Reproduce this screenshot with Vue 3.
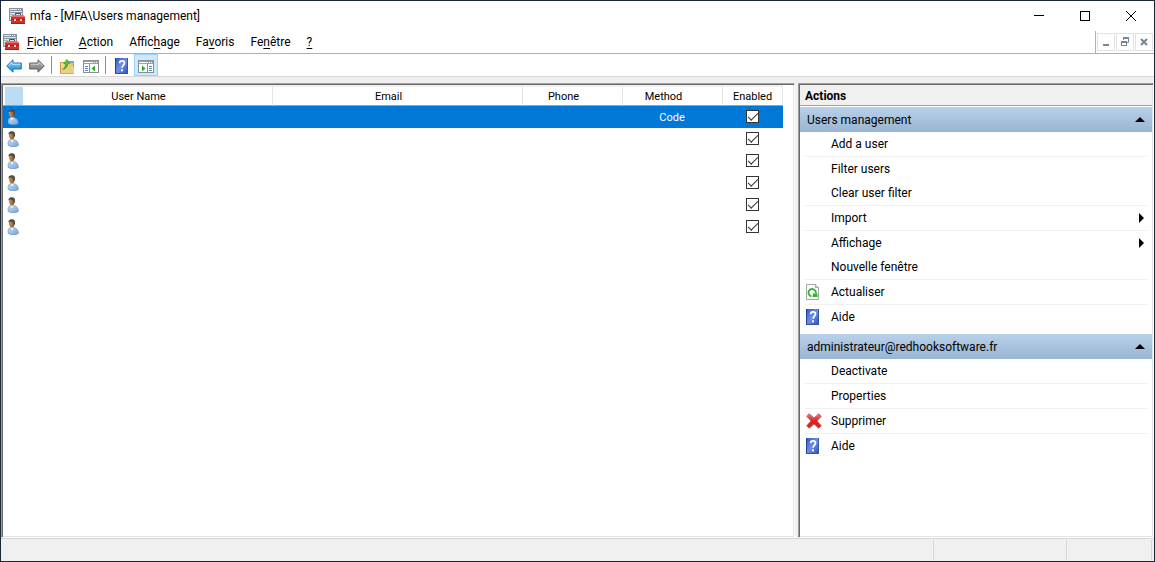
<script setup>
import { ref } from 'vue'

const menus = [
  { before: '', key: 'F', after: 'ichier' },
  { before: '', key: 'A', after: 'ction' },
  { before: 'Affic', key: 'h', after: 'age' },
  { before: 'Fa', key: 'v', after: 'oris' },
  { before: 'Fe', key: 'n', after: 'être' },
  { before: '', key: '?', after: '' },
]

const users = ref([
  { method: 'Code', enabled: true },
  { method: '', enabled: true },
  { method: '', enabled: true },
  { method: '', enabled: true },
  { method: '', enabled: true },
  { method: '', enabled: true },
])
const selected = ref(0)

const groups = [
  {
    title: 'Users management',
    items: [
      { label: 'Add a user', line: true },
      { label: 'Filter users' },
      { label: 'Clear user filter', line: true },
      { label: 'Import', line: true, sub: true },
      { label: 'Affichage', sub: true },
      { label: 'Nouvelle fenêtre', line: true },
      { label: 'Actualiser', line: true, icon: 'refresh' },
      { label: 'Aide', icon: 'help' },
    ],
  },
  {
    title: 'administrateur@redhooksoftware.fr',
    items: [
      { label: 'Deactivate', line: true },
      { label: 'Properties', line: true },
      { label: 'Supprimer', line: true, icon: 'delete' },
      { label: 'Aide', icon: 'help' },
    ],
  },
]
</script>

<template>
  <div class="window">
    <svg class="defs" width="0" height="0" aria-hidden="true">
      <defs>
        <linearGradient id="g-blue" x1="0" y1="0" x2="0" y2="1">
          <stop offset="0" stop-color="#8fdcff" /><stop offset="1" stop-color="#1583d6" />
        </linearGradient>
        <linearGradient id="g-gray" x1="0" y1="0" x2="0" y2="1">
          <stop offset="0" stop-color="#b4b4b4" /><stop offset="1" stop-color="#757575" />
        </linearGradient>
        <linearGradient id="g-help" x1="0" y1="0" x2="1" y2="1">
          <stop offset="0" stop-color="#2f55c4" /><stop offset=".5" stop-color="#6d8fe6" /><stop offset="1" stop-color="#2a4bb0" />
        </linearGradient>
        <linearGradient id="g-red" x1="0" y1="0" x2="0" y2="1">
          <stop offset="0" stop-color="#f08078" /><stop offset=".5" stop-color="#e0201c" /><stop offset="1" stop-color="#d92824" />
        </linearGradient>
        <linearGradient id="g-folder" x1="0" y1="0" x2="1" y2="1">
          <stop offset="0" stop-color="#fbe9a4" /><stop offset="1" stop-color="#dcb04c" />
        </linearGradient>
        <linearGradient id="g-body" x1="0" y1="0" x2="1" y2="1">
          <stop offset="0" stop-color="#c4def5" /><stop offset="1" stop-color="#72a5dc" />
        </linearGradient>
        <linearGradient id="g-face" x1="0" y1="0" x2="1" y2="0">
          <stop offset="0" stop-color="#c9a070" /><stop offset="1" stop-color="#7c4a20" />
        </linearGradient>
        <symbol id="i-app" viewBox="0 0 16 16">
          <rect x=".5" y=".5" width="13" height="12" fill="#dfe4e9" stroke="#8a949e" />
          <rect x="0" y="0" width="14" height="5" fill="#8794a1" />
          <path d="M1 1.500h7M1 3.500h12" stroke="#dfe5ea" />
          <path d="M9 1.500h1M11 1.500h1" stroke="#fff" />
          <path d="M1 6.500h4M1 8.500h2" stroke="#a6b3bf" />
          <path d="M6.500 7.500V5.500h5v2" fill="none" stroke="#5d4240" />
          <path d="M4 7h10l2 2v7H2V9z" fill="#d2322d" />
          <path d="M4 7.500h10M3 8.500h12" stroke="#e4706a" />
          <path d="M2 11.500h14" stroke="#a01b17" />
          <path d="M5 11h2v2H5zM11 11h2v2h-2z" fill="#f4dad8" />
          <path d="M2 15.500h14" stroke="#a51b17" />
        </symbol>
        <symbol id="i-back" viewBox="0 0 16 14">
          <path d="M.7 7 7 .8v3.200h8.300v6H7v3.200z" fill="url(#g-blue)" stroke="#2b6fae" />
          <path d="M2.500 6.800 6 3.300v2h8.200" fill="none" stroke="#b9e9ff" />
        </symbol>
        <symbol id="i-forward" viewBox="0 0 16 14">
          <path d="M15.300 7 9 .8v3.200H.7v6H9v3.200z" fill="url(#g-gray)" stroke="#606060" />
          <path d="M1.800 5.300H10v-2l3.500 3.500" fill="none" stroke="#cfcfcf" />
        </symbol>
        <symbol id="i-folder" viewBox="0 0 15 15">
          <path d="M.5 3.500h5l1-1h7v11.800H.5z" fill="url(#g-folder)" stroke="#c79c3c" />
          <path d="M10 3.500h3.500" stroke="#6aa5d8" />
          <path d="M1 7.500h13v6.500H1z" fill="#ecd07c" />
          <path d="M3 10.500C6.300 9.500 7.700 7.500 7.600 4.600H10L6.900.5 3.800 4.600h1.700C5.700 7 5 8.500 3 10.500z" fill="#55c534" stroke="#2d961b" stroke-width=".7" />
        </symbol>
        <symbol id="i-pane-left" viewBox="0 0 16 13">
          <rect x=".5" y=".5" width="15" height="12" fill="#fff" stroke="#868e96" />
          <path d="M1 1h14v3H1z" fill="#9aa3ab" />
          <path d="M1 2.500h9M11 2.500h1M13 2.500h1" stroke="#fff" />
          <path d="M6.500 4v9" stroke="#868e96" />
          <path d="M2 6.500h3M2 8.500h3M2 10.500h3" stroke="#4e87c4" />
          <path d="M12 5.500v6L8.500 8.500z" fill="#36a82d" />
        </symbol>
        <symbol id="i-pane-right" viewBox="0 0 16 13">
          <rect x=".5" y=".5" width="15" height="12" fill="#fff" stroke="#868e96" />
          <path d="M1 1h14v3H1z" fill="#9aa3ab" />
          <path d="M1 2.500h9M11 2.500h1M13 2.500h1" stroke="#fff" />
          <path d="M9.500 4v9" stroke="#868e96" />
          <path d="M11 6.500h3M11 8.500h3M11 10.500h3" stroke="#4e87c4" />
          <path d="M4 5.500v6l3.500-3z" fill="#36a82d" />
        </symbol>
        <symbol id="i-help" viewBox="0 0 13 16">
          <rect width="13" height="16" fill="url(#g-help)" />
          <path d="M.5 0v16" stroke="#233f9c" />
          <path d="M0 15.500h13M12.500 0v16" stroke="#3553a8" />
          <path d="M4.600 5.300C4.600 3.600 5.600 2.900 7 2.900s2.500.8 2.500 2.200C9.500 7 7.100 7.200 7.100 9.800" fill="none" stroke="#fff" stroke-width="1.700" />
          <rect x="6" y="11.300" width="2" height="2" fill="#fff" />
        </symbol>
        <symbol id="i-refresh" viewBox="0 0 13 16">
          <path d="M.5.5h9l3 3v12H.5z" fill="#fbfbfb" stroke="#a5a5a5" />
          <path d="M9.500.5v3h3" fill="#ddd" stroke="#a5a5a5" />
          <path d="M5.500 12.300A3.700 3.700 0 1 1 9.800 9.500" fill="none" stroke="#35b52e" stroke-width="1.800" />
          <path d="M6.800 9.500h4.700V13H6.800z" fill="#35b52e" />
        </symbol>
        <symbol id="i-delete" viewBox="0 0 16 16">
          <path d="M3.200.8 8 5 12.800.8l2.500 2.400L11 8l4.300 4.800-2.500 2.500L8 11l-4.800 4.300-2.500-2.500L5 8 .7 3.200z" fill="url(#g-red)" stroke="#b5524e" stroke-width=".8" stroke-linejoin="round" />
        </symbol>
        <symbol id="i-user" viewBox="0 0 12 16">
          <path d="M1 12.500C1 9.500 2.600 8.600 5 8.300c3.500.2 6.300 1.800 6.300 6.200C9 16.200 3.500 16.200 1.300 14.500z" fill="url(#g-body)" stroke="#5f86b4" stroke-width=".6" />
          <path d="M3.500 8.500 5 11.500 6.700 8.800 5.500 7.500z" fill="#f7fafd" />
          <path d="M1.700 3.500C1.700 1.300 3 .6 4.800.6S7.700 1.700 7.600 4C7.500 6.700 6.500 8.800 4.800 8.800 3 8.800 1.900 6.300 1.700 3.500z" fill="url(#g-face)" />
          <path d="M1.500 3.200C1.500.9 3 .2 4.900.2 7.200.2 8.300 1.600 8 4.500L7 6.200 6.300 3 3.500 2.400z" fill="#4c4a48" />
        </symbol>
      </defs>
    </svg>

    <header class="title-bar">
      <svg class="app-icon" aria-hidden="true"><use href="#i-app" /></svg>
      <span class="title">mfa - [MFA\Users management]</span>
      <div class="caption">
        <button type="button" aria-label="Réduire"><svg width="10" height="10"><path d="M0 4.500h10" stroke="#000" /></svg></button>
        <button type="button" aria-label="Agrandir"><svg width="10" height="10"><rect x=".5" y=".5" width="9" height="9" fill="none" stroke="#000" /></svg></button>
        <button type="button" aria-label="Fermer"><svg width="10" height="10"><path d="M0 0l10 10M10 0L0 10" stroke="#000" /></svg></button>
      </div>
    </header>

    <nav class="menu-bar">
      <svg class="app-icon" aria-hidden="true"><use href="#i-app" /></svg>
      <button v-for="m in menus" :key="m.key" type="button" class="menu">{{ m.before }}<u>{{ m.key }}</u>{{ m.after }}</button>
      <div class="mdi">
        <button type="button" aria-label="Réduire la vue"><svg width="10" height="10"><path d="M2 8h6" stroke="#778492" stroke-width="2" /></svg></button>
        <button type="button" aria-label="Restaurer la vue"><svg width="10" height="10"><path d="M3.500 3V1.500h5v4H7" fill="none" stroke="#778492" /><path d="M3 1h6" stroke="#778492" stroke-width="2" /><rect x="1.500" y="4.500" width="5" height="4" fill="#fff" stroke="#778492" /><path d="M1 5h6" stroke="#778492" stroke-width="2" /></svg></button>
        <button type="button" aria-label="Fermer la vue"><svg width="10" height="10"><path d="M2 2l6 6M8 2L2 8" stroke="#778492" stroke-width="2" /></svg></button>
      </div>
    </nav>

    <div class="tool-bar">
      <button type="button" class="tool" aria-label="Précédent"><svg width="16" height="14"><use href="#i-back" /></svg></button>
      <button type="button" class="tool" aria-label="Suivant"><svg width="16" height="14"><use href="#i-forward" /></svg></button>
      <span class="sep"></span>
      <button type="button" class="tool" aria-label="Dossier parent"><svg width="15" height="15"><use href="#i-folder" /></svg></button>
      <button type="button" class="tool" aria-label="Arborescence"><svg width="16" height="13"><use href="#i-pane-left" /></svg></button>
      <span class="sep"></span>
      <button type="button" class="tool" aria-label="Aide"><svg width="13" height="16"><use href="#i-help" /></svg></button>
      <button type="button" class="tool on" aria-label="Volet Actions" aria-pressed="true"><svg width="16" height="13"><use href="#i-pane-right" /></svg></button>
    </div>

    <main class="body">
      <section class="pane list">
        <table>
          <colgroup>
            <col class="c-icon" /><col class="c-wide" /><col class="c-wide" /><col class="c-mid" /><col class="c-mid" /><col class="c-last" />
          </colgroup>
          <thead>
            <tr>
              <th class="corner" aria-label="Icône"><span></span></th>
              <th>User Name</th>
              <th>Email</th>
              <th>Phone</th>
              <th>Method</th>
              <th class="tight">Enabled</th>
            </tr>
          </thead>
          <tbody>
            <tr v-for="(u, i) in users" :key="i" :class="{ selected: i === selected }" @click="selected = i">
              <td class="who"><svg width="12" height="16" aria-hidden="true"><use href="#i-user" /></svg></td>
              <td></td>
              <td></td>
              <td></td>
              <td class="method">{{ u.method }}</td>
              <td class="check"><input v-model="u.enabled" type="checkbox" aria-label="Enabled" /></td>
            </tr>
          </tbody>
        </table>
      </section>

      <aside class="pane actions">
        <h2>Actions</h2>
        <section v-for="g in groups" :key="g.title" class="group">
          <button type="button" class="band">
            <span>{{ g.title }}</span>
            <svg width="10" height="5" aria-hidden="true"><path d="M0 5h10L5 0z" /></svg>
          </button>
          <ul>
            <li v-for="it in g.items" :key="it.label" :class="{ line: it.line }">
              <button type="button" class="item">
                <span class="slot">
                  <svg v-if="it.icon === 'delete'" width="16" height="16"><use href="#i-delete" /></svg>
                  <svg v-else-if="it.icon" width="13" height="16"><use :href="'#i-' + it.icon" /></svg>
                </span>
                <span class="label">{{ it.label }}</span>
                <svg v-if="it.sub" class="sub" width="5" height="10" aria-hidden="true"><path d="M0 0v10l5-5z" /></svg>
              </button>
            </li>
          </ul>
        </section>
      </aside>
    </main>

    <footer class="status">
      <span class="s-main"></span><span class="s-mid"></span><span class="s-end"></span>
    </footer>
  </div>
</template>

<style>
body {
  margin: 0;
}
</style>

<style scoped>
.window {
  box-sizing: border-box;
  min-height: 100vh;
  display: flex;
  flex-direction: column;
  border: 1px solid #1b2838;
  background: #fff;
  color: #000;
  font: 12px/16px Roboto, "Open Sans", sans-serif;
}
.defs {
  position: absolute;
}
button {
  padding: 0;
  border: 0;
  background: none;
  font: inherit;
  color: inherit;
}
svg {
  display: block;
  flex: none;
}
.app-icon {
  width: 16px;
  height: 16px;
}
.title-bar {
  display: flex;
  align-items: center;
  height: 30px;
  padding-left: 8px;
}
.title {
  margin-left: 5px;
}
.caption {
  display: flex;
  margin-left: auto;
  height: 100%;
}
.caption button {
  width: 46px;
  display: grid;
  place-items: center;
}
.menu-bar {
  display: flex;
  align-items: center;
  height: 22px;
  padding-left: 2px;
  border-bottom: 1px solid #a9b0ba;
}
.menu {
  padding: 0 8px;
}
.menu u {
  text-underline-offset: 2px;
}
.mdi {
  display: flex;
  align-items: center;
  gap: 1px;
  height: 100%;
  margin-left: auto;
  padding: 0 1px;
  border-left: 1px solid #a9b0ba;
}
.mdi button {
  box-sizing: border-box;
  width: 18px;
  height: 18px;
  border: 1px solid #e3e3e3;
  display: grid;
  place-items: center;
}
.tool-bar {
  display: flex;
  align-items: center;
  height: 22px;
  padding: 0 1px;
  border-bottom: 1px solid #d9d9d9;
}
.tool {
  box-sizing: border-box;
  width: 23px;
  height: 22px;
  padding-top: 2px;
  display: grid;
  place-items: center;
}
.tool.on {
  width: 24px;
  margin-left: 1px;
  border: 1px solid #99d1ff;
  background: #cce8ff;
}
.sep {
  width: 1px;
  height: 18px;
  margin: 0 4px 0 3px;
  background: #8d8d8d;
}
.body {
  flex: 1;
  display: flex;
  gap: 3px;
  padding-top: 6px;
  background: #f0f0f0;
}
.pane {
  box-sizing: border-box;
  border: 1px solid;
  border-color: #a0a0a0 #fff #fff #a0a0a0;
  background: #fff;
  display: flex;
  flex-direction: column;
  align-items: flex-start;
  box-shadow: inset 1px 1px #696969, inset -1px -1px #e3e3e3;
  padding: 1px;
}
.list {
  flex: 1;
  min-width: 0;
  overflow: hidden;
}
.actions {
  flex: none;
  width: 356px;
  align-items: stretch;
}
table {
  table-layout: fixed;
  width: 780px;
  border-collapse: separate;
  border-spacing: 0;
  font-size: 11px;
  line-height: 14px;
}
.c-icon {
  width: 20px;
}
.c-wide {
  width: 250px;
}
.c-mid {
  width: 100px;
}
.c-last {
  width: 60px;
}
th {
  box-sizing: border-box;
  height: 21px;
  padding: 2px 18px 0 0;
  border-top: 2px solid #f0f0f0;
  border-right: 1px solid #e5e5e5;
  border-bottom: 1px solid #a0a0a0;
  font-weight: normal;
}
th.tight {
  padding: 2px 0 0;
}
th.corner {
  padding: 0 0 0 2px;
  border-right: 0;
}
.corner span {
  display: block;
  height: 18px;
  background: #bcdcf4;
}
td {
  box-sizing: border-box;
  height: 22px;
  padding: 0;
  text-align: center;
}
.who svg {
  margin-left: 4px;
}
.method {
  padding: 2px 2px 0 0;
}
.check {
  padding: 0 1px 1px 0;
}
.selected {
  background: #0078d7;
  color: #fff;
}
input {
  appearance: none;
  box-sizing: border-box;
  display: block;
  width: 13px;
  height: 13px;
  margin: 0 auto;
  border: 1px solid #333;
  background: #fff;
  overflow: hidden;
}
input:checked::before {
  content: "";
  display: block;
  box-sizing: border-box;
  width: 10px;
  height: 5px;
  margin: 2px 1px;
  border: solid #333;
  border-width: 0 0 1px 1px;
  transform: rotate(-45deg);
}
h2 {
  margin: 0;
  height: 20px;
  padding-left: 5px;
  border-bottom: 1px solid #a0a0a0;
  background: #f0f0f0;
  font-size: 12px;
  line-height: 22px;
}
.group {
  margin: 1px 0 4px;
}
.band {
  display: flex;
  align-items: center;
  justify-content: space-between;
  width: 100%;
  height: 25px;
  padding: 0 7px;
  background: linear-gradient(#b9d1ea, #99b4d1);
}
ul {
  margin: 0;
  padding: 0 5px;
  list-style: none;
}
.line {
  border-bottom: 1px solid #f0f0f0;
}
.item {
  display: flex;
  align-items: center;
  width: 100%;
  height: 24px;
}
.slot {
  width: 16px;
  display: grid;
  justify-items: start;
  padding-left: 1px;
  box-sizing: border-box;
}
.label {
  margin-left: 10px;
}
.sub {
  margin-left: auto;
  margin-right: 3px;
}
.status {
  display: flex;
  height: 20px;
  padding: 1px 2px 1px 0;
  border-top: 1px solid #d7d7d7;
  background: #f0f0f0;
}
.status span {
  box-sizing: border-box;
  border-right: 1px solid #d7d7d7;
}
.s-main {
  flex: 1;
}
.s-mid {
  width: 133px;
}
.s-end {
  width: 85px;
}
</style>
